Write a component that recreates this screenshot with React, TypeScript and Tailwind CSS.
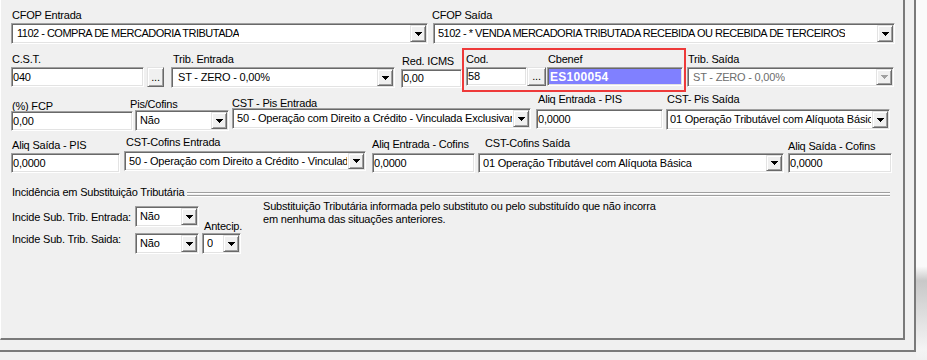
import React from "react";

const sunken =
  "border border-t-[#a0a0a0] border-l-[#a0a0a0] border-r-white border-b-white shadow-[inset_1px_1px_0_#696969,inset_-1px_-1px_0_#e3e3e3]";
const raised =
  "bg-[#f0f0f0] border border-t-[#e3e3e3] border-l-[#e3e3e3] border-r-[#696969] border-b-[#696969] shadow-[inset_1px_1px_0_#ffffff,inset_-1px_-1px_0_#a0a0a0]";

function Arrow({ color = "#000" }: { color?: string }) {
  return (
    <svg width="7" height="4" viewBox="0 0 7 4" shapeRendering="crispEdges">
      <rect x="0" y="0" width="7" height="1" fill={color} />
      <rect x="1" y="1" width="5" height="1" fill={color} />
      <rect x="2" y="2" width="3" height="1" fill={color} />
      <rect x="3" y="3" width="1" height="1" fill={color} />
    </svg>
  );
}

function Combo({
  text,
  className = "",
  textClass = "",
  disabled = false,
}: {
  text: string;
  className?: string;
  textClass?: string;
  disabled?: boolean;
}) {
  return (
    <div className={`${sunken} bg-white flex items-stretch ${className}`}>
      <div
        className={`flex-1 min-w-0 overflow-hidden whitespace-nowrap flex items-center ${
          disabled ? "text-[#6d6d6d]" : "text-black"
        } ${textClass}`}
      >
        <span className="block overflow-hidden">{text}</span>
      </div>
      <div className={`${raised} w-[16px] m-px shrink-0 flex items-center justify-center`}>
        <Arrow color={disabled ? "#a0a0a0" : "#000"} />
      </div>
    </div>
  );
}

function Edit({
  text,
  className = "",
  top = false,
}: {
  text: string;
  className?: string;
  top?: boolean;
}) {
  return (
    <div
      className={`${sunken} bg-white flex pl-px whitespace-nowrap overflow-hidden ${
        top ? "items-start pt-px" : "items-center"
      } ${className}`}
    >
      {text}
    </div>
  );
}

function Dots({ className = "" }: { className?: string }) {
  return (
    <div className={`${raised} flex items-center justify-center leading-none ${className}`}>
      ...
    </div>
  );
}

function Field({
  label,
  className = "",
  labelClass = "",
  children,
}: {
  label: string;
  className?: string;
  labelClass?: string;
  children: React.ReactNode;
}) {
  return (
    <div className={`flex flex-col shrink-0 ${className}`}>
      <div className={`h-[13px] leading-[13px] whitespace-nowrap ${labelClass}`}>{label}</div>
      {children}
    </div>
  );
}

export default function App() {
  return (
    <div className="w-[927px] h-[360px] bg-[#f0f0f0] flex overflow-hidden font-['Liberation_Sans',Arial,sans-serif] text-[11px] text-black tracking-[-0.2px]">
      <div className="w-[916px] h-[352px] shrink-0 border-r-2 border-b-2 border-r-[#7a7a7a] border-b-[#7a7a7a]">
        <div className="w-[905px] h-[340px] border-l border-l-white border-r-2 border-b-2 border-r-[#7a7a7a] border-b-[#7a7a7a] flex flex-col">
          {/* Row 1 */}
          <div className="h-[46px] pl-[10px] flex items-start shrink-0">
            <Field label="CFOP Entrada" className="w-[417px]" labelClass="mt-[9px] pl-px">
              <Combo
                text="1102 - COMPRA DE MERCADORIA TRIBUTADA"
                className="mt-px h-[21px]"
                textClass="pl-[5px] tracking-[-0.5px]"
              />
            </Field>
            <Field label="CFOP Saída" className="ml-[5px] w-[462px]" labelClass="mt-[9px] -ml-px">
              <Combo
                text="5102 - * VENDA MERCADORIA TRIBUTADA RECEBIDA OU RECEBIDA DE TERCEIROS"
                className="mt-px h-[21px]"
                textClass="pl-[4px] tracking-[-0.5px]"
              />
            </Field>
          </div>

          {/* Row 2 */}
          <div className="h-[47px] pl-[10px] flex items-start shrink-0">
            <Field label="C.S.T." className="w-[133px]" labelClass="mt-[7px] pl-px">
              <Edit text="040" className="mt-px h-[20px]" top />
            </Field>
            <Dots className="ml-[3px] mt-[21px] w-[17px] h-[20px] shrink-0" />
            <Field label="Trib. Entrada" className="ml-[7px] w-[224px]" labelClass="mt-[7px] pl-[2px]">
              <Combo text="ST - ZERO - 0,00%" className="mt-px h-[21px]" textClass="pl-[6px]" />
            </Field>
            <Field label="Red. ICMS" className="ml-[6px] w-[61px]" labelClass="mt-[9px] pl-px">
              <Edit text="0,00" className="mt-px h-[19px]" />
            </Field>
            <div className="mt-[2px] w-[224px] h-[44px] shrink-0 border-2 border-[#ee3a3a] pt-[3px] pl-[2px] flex items-start">
              <Field label="Cod." className="w-[61px]">
                <Edit text="58" className="mt-px h-[19px]" />
              </Field>
              <Dots className="mt-[14px] w-[19px] h-[19px] shrink-0" />
              <Field label="Cbenef" className="ml-px w-[136px]" labelClass="pl-px">
                <div className={`${sunken} mt-px h-[19px] bg-[#8080ff] text-white font-bold text-[12px] tracking-[0.3px] flex items-center pl-[2px] whitespace-nowrap`}>
                  ES100054
                </div>
              </Field>
            </div>
            <Field label="Trib. Saída" className="ml-px w-[207px]" labelClass="mt-[7px] pl-px">
              <Combo text="ST - ZERO - 0,00%" className="mt-px h-[20px]" textClass="pl-[5px]" disabled />
            </Field>
          </div>

          {/* Row 3 */}
          <div className="h-[42px] pl-[10px] flex items-start shrink-0">
            <Field label="(%) FCP" className="w-[122px]" labelClass="mt-[7px] pl-px">
              <Edit text="0,00" className="mt-[-2px] h-[20px]" />
            </Field>
            <Field label="Pis/Cofins" className="ml-[2px] w-[94px]" labelClass="mt-[5px] -ml-[5px]">
              <Combo text="Não" className="mt-[-1px] h-[21px]" textClass="pl-[4px]" />
            </Field>
            <Field label="CST - Pis Entrada" className="ml-[3px] w-[299px]" labelClass="mt-[4px]">
              <Combo
                text="50 - Operação com Direito a Crédito - Vinculada Exclusivam"
                className="mt-[-2px] h-[21px]"
                textClass="pl-[4px]"
              />
            </Field>
            <Field label="Aliq Entrada - PIS" className="ml-[5px] w-[127px]" labelClass="pl-[2px]">
              <Edit text="0,0000" className="mt-[3px] h-[20px]" />
            </Field>
            <Field label="CST- Pis Saída" className="ml-[3px] w-[224px]" labelClass="pl-px">
              <Combo
                text="01 Operação Tributável com Alíquota Básica"
                className="mt-[3px] h-[21px]"
                textClass="pl-[3px]"
              />
            </Field>
          </div>

          {/* Row 4 */}
          <div className="h-[51px] pl-[10px] flex items-start shrink-0">
            <Field label="Aliq Saída - PIS" className="w-[109px]" labelClass="mt-[4px] pl-px">
              <Edit text="0,0000" className="mt-px h-[20px]" />
            </Field>
            <Field label="CST-Cofins Entrada" className="ml-[4px] w-[242px]" labelClass="mt-px pl-[2px]">
              <Combo
                text="50 - Operação com Direito a Crédito - Vinculada"
                className="mt-[2px] h-[20px]"
                textClass="pl-[4px]"
              />
            </Field>
            <Field label="Aliq Entrada - Cofins" className="ml-[6px] w-[103px]" labelClass="mt-[3px]">
              <Edit text="0,0000" className="mt-[2px] h-[20px]" />
            </Field>
            <Field label="CST-Cofins Saída" className="ml-[3px] w-[306px]" labelClass="mt-[2px] pl-[7px]">
              <Combo
                text="01 Operação Tributável com Alíquota Básica"
                className="mt-[3px] h-[20px]"
                textClass="pl-[4px]"
              />
            </Field>
            <Field label="Aliq Saída - Cofins" className="ml-[4px] w-[104px]" labelClass="mt-[5px]">
              <Edit text="0,0000" className="h-[20px]" />
            </Field>
          </div>

          {/* Group header */}
          <div className="h-[13px] pl-[10px] pr-[13px] flex items-start shrink-0">
            <div className="h-[13px] leading-[13px] whitespace-nowrap pl-px">
              Incidência em Substituição Tributária
            </div>
            <div className="flex-1 ml-[3px] mt-[6px] flex flex-col">
              <div className="h-px bg-[#a0a0a0]" />
              <div className="h-px bg-white" />
              <div className="h-px" />
              <div className="h-px bg-[#a0a0a0]" />
              <div className="h-px bg-white" />
            </div>
          </div>

          {/* Group content */}
          <div className="pl-[10px] flex items-start shrink-0">
            <div className="ml-px w-[123px] flex flex-col shrink-0">
              <div className="mt-[12px] h-[13px] leading-[13px] whitespace-nowrap">Incide Sub. Trib. Entrada:</div>
              <div className="mt-[9px] h-[13px] leading-[13px] whitespace-nowrap">Incide Sub. Trib. Saida:</div>
            </div>
            <div className="w-[64px] flex flex-col shrink-0">
              <Combo text="Não" className="mt-[7px] h-[21px]" textClass="pl-[4px]" />
              <Combo text="Não" className="mt-[6px] h-[21px]" textClass="pl-[4px]" />
            </div>
            <div className="ml-[3px] w-[39px] flex flex-col shrink-0">
              <div className="mt-[21px] h-[13px] leading-[13px] pl-[2px] whitespace-nowrap">Antecip.</div>
              <Combo text="0" className="h-[21px]" textClass="pl-[4px]" />
            </div>
            <div className="ml-[22px] mt-px leading-[13px] whitespace-nowrap">
              Substituição Tributária informada pelo substituto ou pelo substituído que não incorra
              <br />
              em nenhuma das situações anteriores.
            </div>
          </div>
        </div>
      </div>
      <div className="w-[11px] h-full shrink-0 bg-[linear-gradient(to_bottom,#fafafa_0%,#fafafa_74%,#c8c8c8_78%,#f4f4f4_97%,#f0f0f0_100%)]" />
    </div>
  );
}
